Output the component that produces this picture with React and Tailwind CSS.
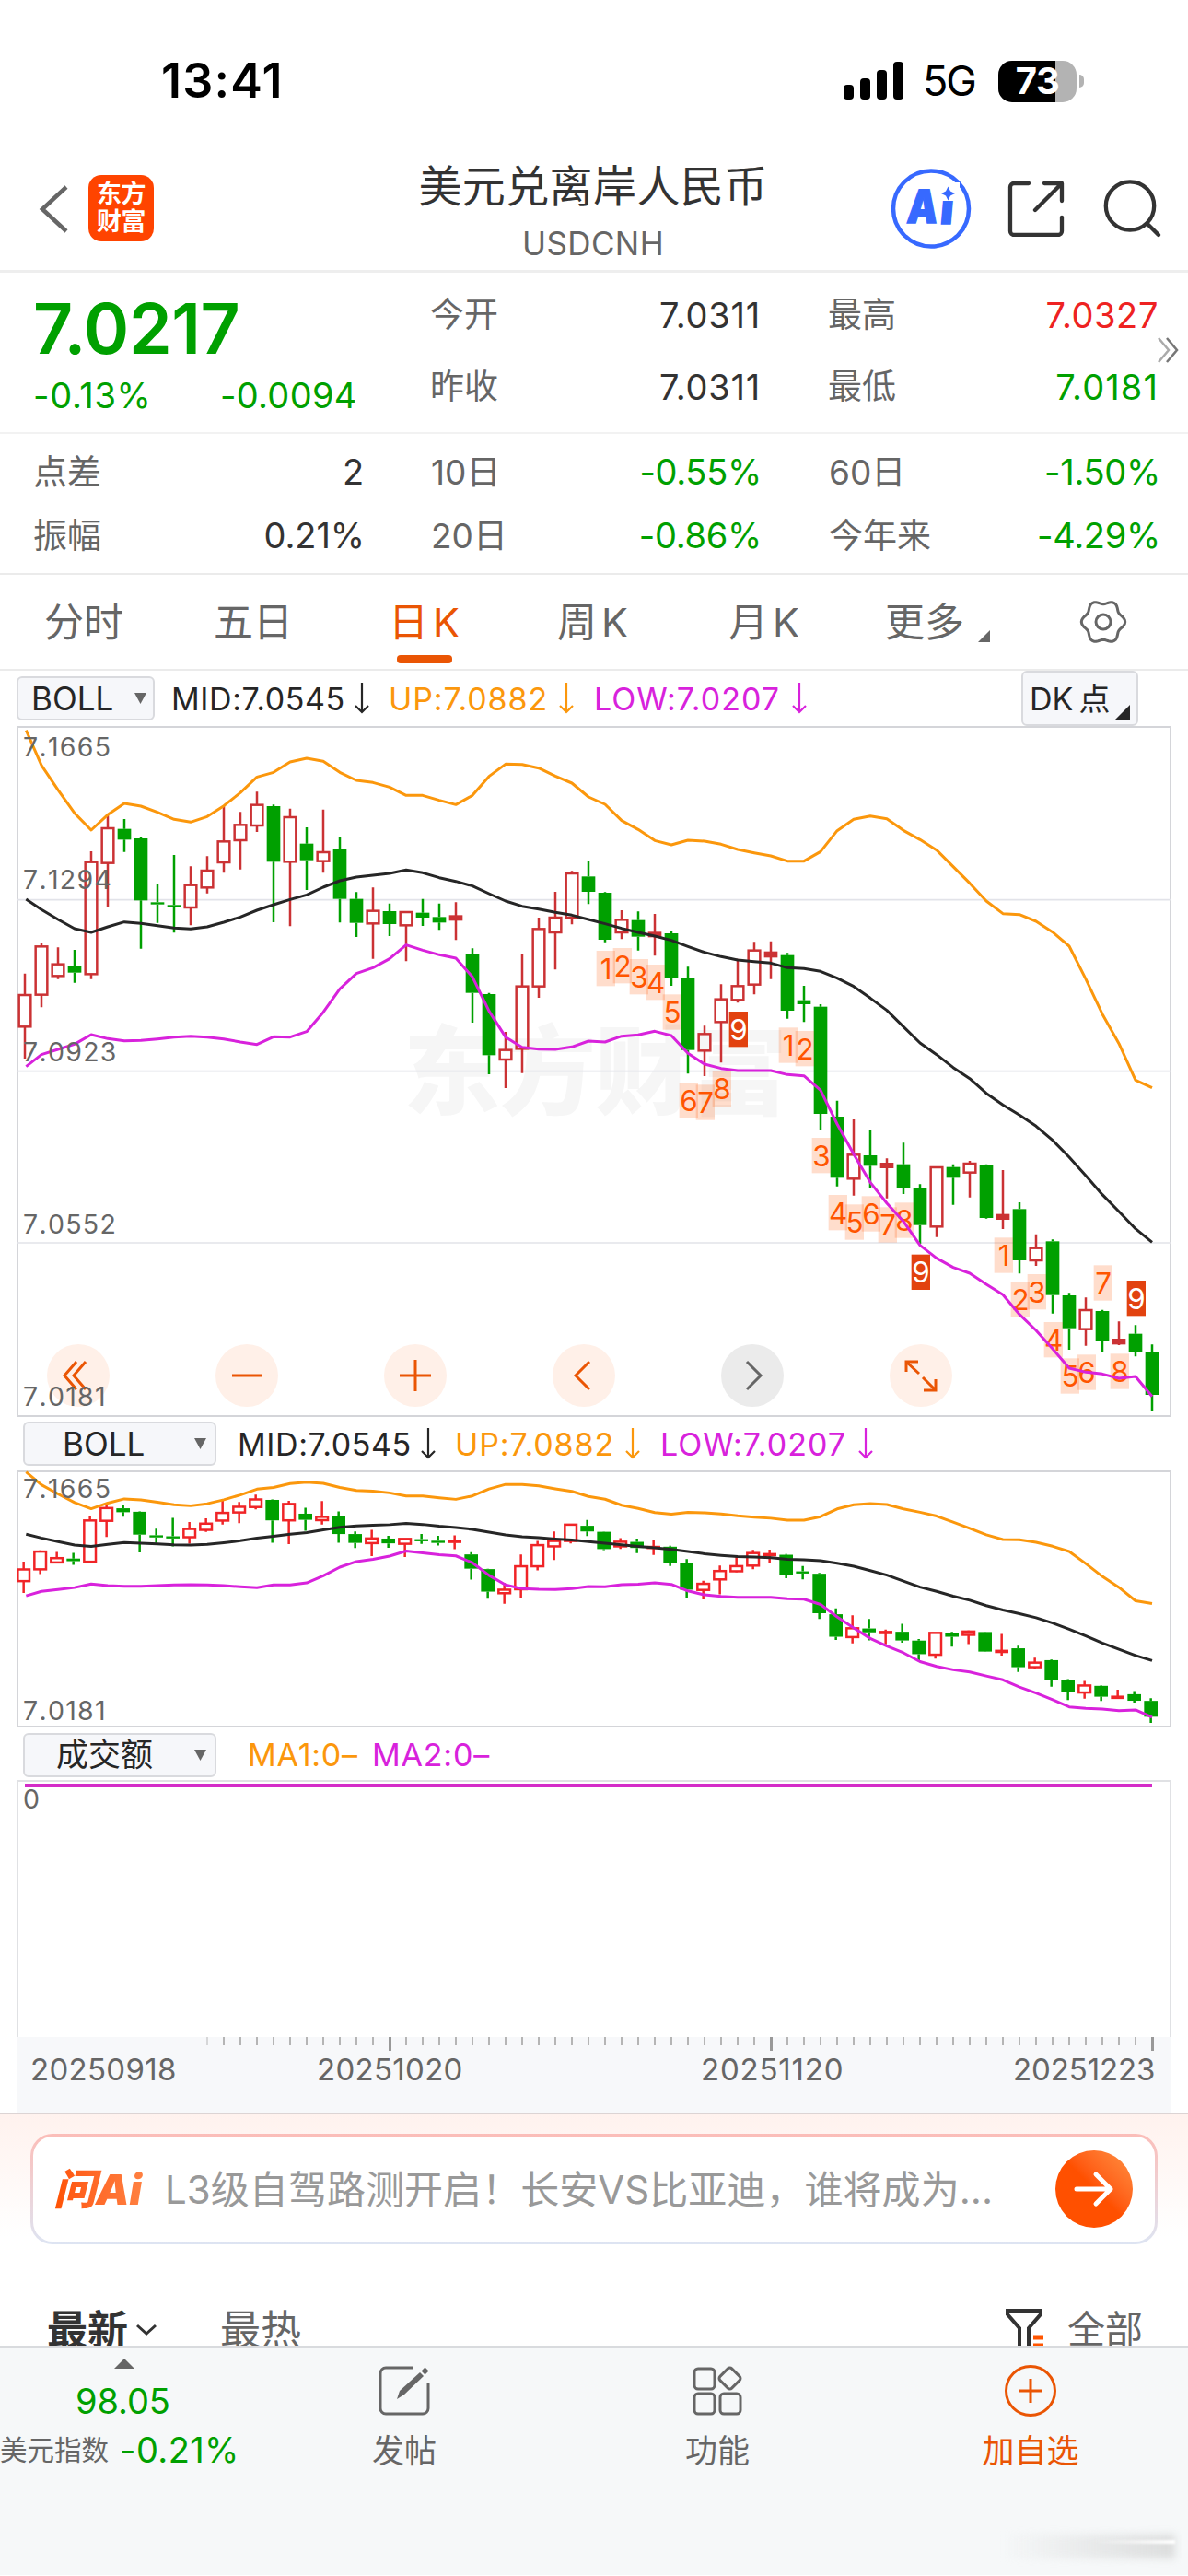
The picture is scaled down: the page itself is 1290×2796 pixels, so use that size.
const FONT = 'font-[Inter,"Noto_Sans_CJK_SC",sans-serif]';

// [color, high, bodyTop, bodyBottom, low], in 1/3 px
const candles = [
  ['r', 1010, 1080, 1183, 1287], ['r', 912, 922, 1079, 1120], ['r', 925, 980, 1018, 1028],
  ['g', 933, 984, 1007, 1040], ['r', 612, 647, 1012, 1028], ['r', 495, 537, 650, 793],
  ['g', 507, 539, 574, 614], ['g', 567, 570, 772, 929], ['g', 720, 778, 784, 845],
  ['g', 624, 787, 794, 877], ['r', 661, 722, 795, 853], ['r', 628, 675, 730, 749],
  ['r', 465, 580, 648, 682], ['r', 484, 526, 576, 671], ['r', 418, 461, 528, 549],
  ['g', 460, 465, 646, 843], ['r', 473, 501, 646, 856], ['g', 534, 587, 641, 738],
  ['r', 476, 615, 644, 682], ['g', 567, 604, 767, 844], ['g', 745, 767, 845, 891],
  ['r', 730, 806, 847, 962], ['g', 782, 807, 849, 888], ['r', 808, 810, 853, 970],
  ['g', 767, 812, 828, 855], ['g', 782, 826, 844, 868], ['r', 778, 822, 836, 901],
  ['g', 928, 947, 1073, 1170], ['g', 1073, 1077, 1276, 1338], ['r', 1200, 1259, 1290, 1383],
  ['r', 948, 1052, 1255, 1334], ['r', 828, 865, 1052, 1089], ['r', 744, 828, 876, 997],
  ['r', 676, 684, 828, 850], ['g', 643, 694, 744, 784], ['g', 745, 747, 900, 908],
  ['r', 804, 835, 876, 898], ['g', 808, 836, 890, 935], ['r', 816, 876, 890, 952],
  ['g', 870, 879, 1026, 1050], ['g', 988, 1025, 1259, 1336], ['r', 1180, 1207, 1261, 1344],
  ['r', 1045, 1094, 1168, 1300], ['r', 962, 1051, 1096, 1105], ['r', 907, 935, 1046, 1078],
  ['r', 905, 940, 956, 1028], ['g', 943, 950, 1131, 1157], ['g', 1050, 1097, 1110, 1168],
  ['g', 1110, 1118, 1467, 1518], ['g', 1424, 1476, 1675, 1703], ['r', 1485, 1600, 1678, 1733],
  ['g', 1518, 1602, 1636, 1708], ['r', 1612, 1628, 1642, 1742], ['g', 1561, 1631, 1708, 1728],
  ['g', 1696, 1709, 1829, 1890], ['r', 1640, 1641, 1834, 1868], ['g', 1631, 1640, 1675, 1763],
  ['r', 1620, 1629, 1658, 1739], ['g', 1631, 1633, 1806, 1808], ['r', 1650, 1795, 1810, 1842],
  ['g', 1755, 1777, 1944, 1987], ['r', 1859, 1904, 1944, 1962], ['g', 1876, 1882, 2057, 2117],
  ['g', 2050, 2058, 2165, 2235], ['r', 2065, 2106, 2168, 2222], ['g', 2105, 2109, 2205, 2242],
  ['r', 2143, 2201, 2216, 2220], ['g', 2155, 2183, 2241, 2257], ['g', 2218, 2242, 2382, 2436],
];

const upper = [218, 332, 412, 488, 543, 493, 456, 465, 485, 508, 517, 499, 464, 421, 370, 355, 321, 309, 319, 355, 381, 388, 403, 430, 430, 446, 460, 430, 368, 328, 329, 341, 367, 390, 435, 459, 512, 541, 577, 591, 576, 579, 589, 606, 617, 627, 644, 644, 613, 545, 508, 497, 506, 544, 574, 608, 662, 716, 774, 815, 818, 840, 875, 921, 1028, 1142, 1238, 1357, 1382];
const middle = [768, 802, 834, 864, 876, 858, 842, 847, 854, 862, 865, 858, 843, 826, 804, 786, 769, 754, 729, 708, 696, 690, 684, 673, 682, 698, 710, 725, 750, 774, 791, 800, 811, 820, 834, 848, 863, 876, 888, 902, 922, 941, 955, 966, 971, 976, 991, 994, 1003, 1025, 1052, 1090, 1130, 1183, 1236, 1274, 1316, 1352, 1400, 1438, 1471, 1507, 1553, 1608, 1668, 1730, 1785, 1841, 1885];
const lower = [1313, 1274, 1257, 1240, 1209, 1222, 1229, 1228, 1223, 1217, 1214, 1217, 1223, 1233, 1241, 1216, 1217, 1199, 1136, 1060, 1010, 991, 962, 917, 934, 949, 960, 1021, 1132, 1217, 1250, 1256, 1257, 1249, 1230, 1233, 1214, 1210, 1198, 1212, 1270, 1305, 1319, 1326, 1326, 1326, 1339, 1343, 1390, 1500, 1598, 1690, 1758, 1817, 1895, 1937, 1967, 1986, 2022, 2056, 2120, 2172, 2232, 2295, 2308, 2314, 2328, 2322, 2387];

// [candle index, digit, top]
const marks = [
  [35, 1, 936], [36, 2, 927], [37, 3, 963], [38, 4, 981], [39, 5, 1078], [40, 6, 1365], [41, 7, 1372],
  [42, 8, 1328], [43, 9, 1134], [46, 1, 1186], [47, 2, 1197], [48, 3, 1545], [49, 4, 1731], [50, 5, 1762],
  [51, 6, 1735], [52, 7, 1771], [53, 8, 1756], [54, 9, 1925], [59, 1, 1870], [60, 2, 2015], [61, 3, 1989],
  [62, 4, 2145], [63, 5, 2263], [64, 6, 2251], [65, 7, 1960], [66, 8, 2248], [67, 9, 2010],
];

const xAt = (i) => 81 + 54 * i;
const same = (v) => v;
const squeeze = (v) => 2633 + (v - 218) * 0.3683;

const Candles = ({ y, red, shift = 0 }) =>
  candles.map(([c, h, t, b, l], i) => {
    const x = xAt(i) + shift;
    const color = c === 'r' ? red : '#00a000';
    const top = y(t);
    const height = Math.max(y(b) - top, 7);
    const hollow = c === 'r' && height > 9 && b - t > 20;
    return (
      <g key={i} stroke={color} strokeWidth="7.5">
        <path d={`M${x} ${y(h)}V${top}M${x} ${top + height}V${y(l)}`} />
        {hollow ? (
          <rect x={x - 19} y={top} width="38" height={height} fill="none" />
        ) : (
          <rect x={x - 22} y={top - (c === 'r' ? 2 : 0)} width="44" height={height + (c === 'r' ? 4 : 0)} fill={color} stroke="none" />
        )}
      </g>
    );
  });

const Line = ({ data, y, color }) => (
  <polyline
    points={data.map((v, i) => `${xAt(i) + (i === 0 ? 4 : 0)},${y(v)}`).join(' ')}
    fill="none"
    stroke={color}
    strokeWidth="9"
    strokeLinejoin="round"
  />
);

const Lines = ({ y }) => (
  <>
    <Line data={upper} y={y} color="#fb970c" />
    <Line data={middle} y={y} color="#262626" />
    <Line data={lower} y={y} color="#d822dc" />
  </>
);

const DownArrow = () => (
  <svg className="ml-[10px] h-[36px] w-[16px] shrink-0" viewBox="0 0 16 36" fill="none" stroke="currentColor" strokeWidth="2.2">
    <path d="M8 1v32M1 26l7 7 7-7" />
  </svg>
);

const Caret = () => (
  <svg className="h-[12px] w-[13px]" viewBox="0 0 13 12" fill="#666"><path d="M0 0h13L6.5 12z" /></svg>
);

const BollLegend = () => (
  <>
    <div className="flex w-[236px] items-center text-[#262626]">
      <span className="w-[189px] text-[34px] tracking-[0.6px]">MID:7.0545</span><DownArrow />
    </div>
    <div className="flex w-[223px] items-center text-[#fb970c]">
      <span className="w-[175px] text-[34px] tracking-[0.9px]">UP:7.0882</span><DownArrow />
    </div>
    <div className="flex items-center text-[#d822dc]">
      <span className="w-[205px] text-[34px] tracking-[1px]">LOW:7.0207</span><DownArrow />
    </div>
  </>
);

const StatusBar = () => (
  <div className="flex h-[150px] items-center pt-[26px] pr-[113px] pl-[175px] text-black">
    <span className="text-[52px] font-semibold tracking-[1.2px]">13:41</span>
    <div className="ml-auto flex items-center">
      <svg className="h-[42px] w-[66px]" viewBox="0 0 66 42">
        <rect y="25" width="11" height="16" rx="4" />
        <rect x="18" y="18" width="11" height="23" rx="4" />
        <rect x="36" y="9" width="11" height="32" rx="4" />
        <rect x="54" y="0" width="11" height="41" rx="4" />
      </svg>
      <span className="ml-[20px] w-[62px] text-[45px] tracking-[-2px]">5G</span>
      <div className="relative ml-[20px] h-[45px] w-[85px] overflow-hidden rounded-[15px] bg-[#b3b3b3]">
        <div className="h-full w-[62px] bg-black" />
        <span className="absolute inset-0 flex items-center justify-center text-[40px] font-bold tracking-[-0.5px] text-white">73</span>
      </div>
      <div className="ml-[3px] h-[14px] w-[5px] rounded-r-full bg-[#b3b3b3]" />
    </div>
  </div>
);

const Header = () => (
  <div className="relative flex h-[146px] items-center border-b-[3px] border-[#eee]">
    <svg className="ml-[42px] mt-[10px] h-[54px] w-[34px]" viewBox="0 0 34 54" fill="none" stroke="#666" strokeWidth="4.500">
      <path d="M30 3L4 27l26 24" />
    </svg>
    <div className="mt-[9px] ml-[20px] flex h-[72px] w-[71px] flex-col items-center justify-center rounded-[14px] bg-[#ff4400] text-[27px] leading-[30px] font-bold tracking-[-0.5px] text-white">
      <span>东方</span>
      <span>财富</span>
    </div>
    <div className="absolute inset-x-0 top-[20px] flex flex-col items-center pr-[2px]">
      <span className="text-[47px] leading-[64px] tracking-[0.4px] text-[#333]">美元兑离岸人民币</span>
      <span className="text-[35px] leading-[60px] tracking-[0.4px] text-[#666]">USDCNH</span>
    </div>
    {/* Right icons */}
    <svg className="mt-[9px] ml-auto h-[88px] w-[88px]" viewBox="0 0 88 88" fill="none" stroke="#3769ff">
      <circle cx="44" cy="44.500" r="41" strokeWidth="4.500" />
      <g transform="translate(21 61) skewX(-5)" fill="#3769ff" stroke="#3769ff" strokeWidth="1.500" fontSize="50" fontWeight="900">
        <text x="-4" y="-1" textLength="33" lengthAdjust="spacingAndGlyphs">A</text>
        <text x="32" y="0" fontSize="48">i</text>
      </g>
      <rect x="51" y="16" width="24" height="20" fill="#fff" stroke="none" />
      <path d="M62.500 20.500l2.500 5 5 2.500-5 2.500-2.500 5-2.500-5-5-2.500 5-2.500z" fill="#3769ff" stroke="none" />
    </svg>
    <svg className="mt-[9px] ml-[38px] h-[62px] w-[64px]" viewBox="0 0 64 62" fill="none" stroke="#333" strokeWidth="4.300" strokeLinecap="round" strokeLinejoin="round">
      <path d="M24 4H8a4 4 0 0 0-4 4v48a4 4 0 0 0 4 4h48a4 4 0 0 0 4-4V41M41 4h19v19M59 5L31 33" />
    </svg>
    <svg className="mt-[9px] mr-[29px] ml-[40px] h-[64px] w-[64px]" viewBox="0 0 64 64" fill="none" stroke="#333" strokeWidth="4.300" strokeLinecap="round">
      <circle cx="30" cy="29.500" r="26.200" />
      <path d="M49 49l12 12" />
    </svg>
  </div>
);

const Stat = ({ label, value, color = 'text-[#333] tracking-[0.8px]' }) => (
  <div className="flex items-center justify-between">
    <span className="text-[37px] text-[#666]">{label}</span>
    <span className={`text-[38px] ${color}`}>{value}</span>
  </div>
);

const green = 'text-[#00a000] tracking-[-0.3px]';

const Quote = () => (
  <>
    <div className="relative flex h-[173px] text-[#00a000]">
      <div className="w-[467px] pl-[36px]">
        <div className="mt-[16px] text-[75px] leading-[90px] font-semibold tracking-[-0.4px]">7.0217</div>
        <div className="flex h-[54px] items-center text-[38px]">
          <span className="w-[203px] tracking-[0.7px]">-0.13%</span>
          <span className="tracking-[0.3px]">-0.0094</span>
        </div>
      </div>
      <div className="grid w-[359px] grid-rows-[78px_78px] pt-[7px]">
        <Stat label="今开" value="7.0311" />
        <Stat label="昨收" value="7.0311" />
      </div>
      <div className="ml-[73px] grid w-[359px] grid-rows-[78px_78px] pt-[7px]">
        <Stat label="最高" value="7.0327" color="text-[#ee2222] tracking-[0.6px]" />
        <Stat label="最低" value="7.0181" color="text-[#00a000] tracking-[1.1px]" />
      </div>
      <svg className="absolute top-[69px] right-[9px] h-[30px] w-[25px]" viewBox="0 0 25 30" fill="none" stroke="#777" strokeWidth="2.500">
        <path d="M2 2l11 13L2 28" stroke="#aaa" />
        <path d="M11 2l11 13-11 13" />
      </svg>
    </div>
    <div className="flex h-[153px] border-t-2 border-[#f2f2f2]">
      <div className="ml-[36px] grid w-[360px] grid-rows-[69px_69px] pt-[7px]">
        <Stat label="点差" value="2" />
        <Stat label="振幅" value="0.21%" color="text-[#333] tracking-[-0.1px]" />
      </div>
      <div className="ml-[72px] grid w-[359px] grid-rows-[69px_69px] pt-[7px]">
        <Stat label="10日" value="-0.55%" color={green} />
        <Stat label="20日" value="-0.86%" color={green} />
      </div>
      <div className="ml-[73px] grid w-[360px] grid-rows-[69px_69px] pt-[7px]">
        <Stat label="60日" value="-1.50%" color={green} />
        <Stat label="今年来" value="-4.29%" color={green} />
      </div>
    </div>
  </>
);

const gear = Array.from({ length: 72 }, (_, k) => {
  const a = (k * Math.PI) / 36;
  const r = 21.5 + 2.2 * Math.cos(6 * a);
  return `${(26 + r * Math.cos(a)).toFixed(2)},${(26 + r * Math.sin(a)).toFixed(2)}`;
}).join(' ');

const Periods = () => (
  <div className="flex h-[106px] items-center border-t-2 border-b-2 border-[#ebebeb] text-[43px] text-[#666]">
    <span className="ml-[48px] w-[184px]">分时</span>
    <span className="w-[190px]">五日</span>
    <span className="relative w-[183px] text-[#ea5504]">
      日<span className="ml-[5px]">K</span>
      <span className="absolute -bottom-[13px] left-[9px] h-[9px] w-[60px] rounded-[4px] bg-[#ea5504]" />
    </span>
    <span className="w-[186px]">周<span className="ml-[5px]">K</span></span>
    <span className="w-[170px]">月<span className="ml-[5px]">K</span></span>
    <span>更多</span>
    <svg className="mt-[30px] ml-[15px] h-[13px] w-[13px]" viewBox="0 0 13 13" fill="#666"><path d="M13 0v13H0z" /></svg>
    <svg className="ml-[97px] h-[52px] w-[52px]" viewBox="0 0 52 52" fill="none" stroke="#666" strokeWidth="3">
      <polygon points={gear} />
      <circle cx="26" cy="26" r="8" />
    </svg>
  </div>
);

const YLabel = ({ className, children }) => (
  <span className={`absolute left-[5px] text-[28.5px] leading-[28px] tracking-[1.3px] text-[#666] [font-kerning:none] ${className}`}>{children}</span>
);

const controls = [
  { d: 'M32 19L19 34l13 15M42 19L29 34l13 15', style: 'left-[31px] bg-[#fff0e8] text-[#ea5504]' },
  { d: 'M18 34h32', style: 'left-[214px] bg-[#fff0e8] text-[#ea5504]' },
  { d: 'M17 34h34M34 17v34', style: 'left-[397px] bg-[#fff0e8] text-[#ea5504]' },
  { d: 'M40 19L25 34l15 15', style: 'left-[580px] bg-[#fff0e8] text-[#ea5504]' },
  { d: 'M28 19l15 15-15 15', style: 'left-[763px] bg-[#ebebeb] text-[#666]' },
  { d: 'M18 30V19h13M18 19l14 13M50 38v12H37M50 50L36 36', style: 'left-[946px] bg-[#fff0e8] text-[#ea5504]' },
];

const MainChart = () => (
  <div className="relative ml-[18px] h-[750px] w-[1254px] border-2 border-b-[#d4d5d9] border-[#d4d5d9]">
    <span className="absolute top-[318px] left-[418px] flex text-[105px] leading-[110px] font-black tracking-[-1px] text-[#f6f6f6]">东方财富</span>
    {controls.map(({ d, style }) => (
      <button key={d} className={`absolute top-[669px] h-[68px] w-[68px] rounded-full ${style}`}>
        <svg viewBox="0 0 68 68" fill="none" stroke="currentColor" strokeWidth="3"><path d={d} /></svg>
      </button>
    ))}
    <svg className="absolute -top-[2px] -left-[2px] h-[750px] w-[1254px]" viewBox="54 204 3762 2250">
      <g stroke="#e2e3e9" strokeWidth="5">
        <path d="M54 770H3816M54 1328H3816M54 1887H3816" />
      </g>
      <Candles y={same} red="#cb3234" />
      {marks.map(([i, n, top]) => (
        <g key={i}>
          <rect x={xAt(i) - 28} y={top} width="61" height="115" fill={n === 9 ? '#e2420f' : '#ff5500'} fillOpacity={n === 9 ? 1 : 0.2} />
          <text x={xAt(i) + 3} y={top + 92} textAnchor="middle" fontSize="94" fill={n === 9 ? '#fff' : '#ff5500'}>{n}</text>
        </g>
      ))}
      <Lines y={same} />
    </svg>
    <YLabel className="top-[7px]">7.1665</YLabel>
    <YLabel className="top-[151px]">7.1294</YLabel>
    <YLabel className="top-[338px]">7.0923</YLabel>
    <YLabel className="top-[525px]">7.0552</YLabel>
    <YLabel className="top-[712px]">7.0181</YLabel>
  </div>
);

const SubChart = () => (
  <div className="relative ml-[18px] h-[279px] w-[1254px] border-2 border-[#d4d5d9]">
    <svg className="absolute -top-[2px] -left-[2px] h-[278px] w-[1254px]" viewBox="54 2628 3762 834">
      <Candles y={squeeze} red="#f02427" shift={-4} />
      <Lines y={squeeze} />
    </svg>
    <YLabel className="top-[4px]">7.1665</YLabel>
    <YLabel className="top-[245px]">7.0181</YLabel>
  </div>
);

const VolumeChart = () => (
  <>
    <div className="relative ml-[18px] h-[279px] w-[1254px] border-2 border-b-0 border-[#e0e1e4]">
      <div className="absolute top-[2px] left-[7px] h-[4px] w-[1224px] bg-[#d42cc8]" />
      <YLabel className="top-[5px]">0</YLabel>
    </div>
    <div className="ml-[18px] h-[82px] w-[1254px] bg-[#f7f8fa]">
      <svg className="block h-[15px] w-[1254px]" viewBox="18 0 1254 15">
        {Array.from({ length: 58 }, (_, k) => {
          const major = (k - 11) % 23 === 0;
          return (
            <rect key={k} x={224 + 18 * k} width={major ? 3 : 2} height={major ? 15 : 9} fill={major ? '#999' : '#b5b5b5'} opacity={k === 0 ? 0.5 : 1} />
          );
        })}
      </svg>
      <div className="flex h-[40px] items-center pt-[2px] pl-[15px] text-[33px] tracking-[0.3px] text-[#666]">
        <span className="w-[311px]">20250918</span>
        <span className="w-[417px]">20251020</span>
        <span className="w-[339px] tracking-[0.8px]">20251120</span>
        <span className="tracking-[-0.1px]">20251223</span>
      </div>
    </div>
  </>
);

const AskBar = () => (
  <div className="h-[180px] border-t-2 border-[#dcd4d4] bg-linear-to-b from-[#fff2ee] to-white to-75% px-[33px] pt-[21px]">
    <div className="h-[120px] rounded-[24px] bg-linear-to-b from-[#fbbdb8] to-[#dde4f2] p-[3px]">
      <div className="flex h-full items-center rounded-[21px] bg-white pr-[24px] pl-[22px]">
        <span className="w-[121px] bg-linear-to-r from-[#ff5200] to-[#ff8a4a] bg-clip-text text-[46px] font-black text-transparent italic">
          问Ai
        </span>
        <span className="whitespace-nowrap text-[42px] tracking-[0.05px] text-[#999]">L3级自驾路测开启！长安VS比亚迪，谁将成为...</span>
        <button className="ml-auto flex h-[84px] w-[84px] shrink-0 items-center justify-center rounded-full bg-linear-to-tr from-[#ff5000] from-50% to-[#ff9040]">
          <svg className="h-[44px] w-[44px]" viewBox="0 0 44 44" fill="none" stroke="#fff" strokeWidth="5" strokeLinecap="round" strokeLinejoin="round">
            <path d="M3 22h37M24 6l16 16-16 16" />
          </svg>
        </button>
      </div>
    </div>
  </div>
);

const Comments = () => (
  <div className="h-[73px] overflow-hidden">
    <div className="mt-[24px] flex h-[64px] items-center text-[44px] text-[#666]">
      <span className="ml-[51px] font-bold text-[#333]">最新</span>
      <svg className="ml-[8px] h-[14px] w-[24px]" viewBox="0 0 24 14" fill="none" stroke="#333" strokeWidth="3"><path d="M2 2l10 9L22 2" /></svg>
      <span className="ml-[68px]">最热</span>
      <svg className="mt-[2px] ml-auto h-[50px] w-[44px]" viewBox="0 0 44 50" fill="none" stroke="#333" strokeWidth="4">
        <path d="M16 42V22L3 7V3h36v4L26 22v25" />
        <path d="M31 32h11M31 41h11" stroke="#ff5500" strokeWidth="5" />
      </svg>
      <span className="mr-[49px] ml-[24px] text-[41px]">全部</span>
    </div>
  </div>
);

const BottomBar = () => (
  <div className="relative flex h-[249px] border-t-2 border-[#d9dbde] bg-[#f6f8f9] text-[35px] text-[#666]">
    <div className="flex w-[270px] flex-col">
      <svg className="mt-[12px] ml-[124px] h-[11px] w-[22px]" viewBox="0 0 22 11" fill="#666"><path d="M11 0l11 11H0z" /></svg>
      <span className="mt-[8px] pl-[82px] text-[38px] leading-[54px] tracking-[-0.1px] text-[#00a000]">98.05</span>
      <div className="flex h-[52px] items-center">
        <span className="w-[130px] whitespace-nowrap text-[29.5px]">美元指数</span>
        <span className="text-[38px] tracking-[0.4px] text-[#00a000]">-0.21%</span>
      </div>
    </div>
    <div className="flex w-[338px] flex-col items-center">
      <svg className="mt-[20px] h-[54px] w-[56px]" viewBox="0 0 56 54" fill="none" stroke="#666" strokeWidth="3">
        <path d="M38 2H8a6 6 0 0 0-6 6v38a6 6 0 0 0 6 6h40a6 6 0 0 0 6-6V18" />
        <path d="M20 36l3-9L45 7l4 4-21 20z" fill="#666" stroke="none" />
        <path d="M46.500 5.500l4-4 4 4-4 4z" fill="#666" stroke="none" />
      </svg>
      <span className="mt-[12px] leading-[52px]">发帖</span>
    </div>
    <div className="flex w-[342px] flex-col items-center">
      <svg className="mt-[20px] h-[54px] w-[54px]" viewBox="0 0 54 54" fill="none" stroke="#666" strokeWidth="3">
        <rect x="2" y="3" width="22" height="22" rx="4" />
        <rect x="2" y="30" width="22" height="22" rx="4" />
        <rect x="30" y="30" width="22" height="22" rx="4" />
        <rect x="31.500" y="4.500" width="18" height="18" rx="3" transform="rotate(45 40.500 13.500)" />
      </svg>
      <span className="mt-[12px] leading-[52px]">功能</span>
    </div>
    <div className="flex w-[338px] flex-col items-center text-[#ea5504]">
      <svg className="mt-[18px] h-[58px] w-[58px]" viewBox="0 0 58 58" fill="none" stroke="currentColor" strokeWidth="3">
        <circle cx="29" cy="29" r="26.500" />
        <path d="M16 29h26M29 16v26" />
      </svg>
      <span className="mt-[10px] leading-[52px]">加自选</span>
    </div>
    {/* Faint smudge in the corner */}
    <div className="absolute right-[14px] bottom-[18px] h-[26px] w-[190px] bg-linear-to-r from-transparent to-[#dcdddd] blur-[4px]" />
    <div className="absolute right-[14px] bottom-[34px] h-[4px] w-[90px] bg-linear-to-r from-transparent to-white blur-[1px]" />
  </div>
);

const App = () => (
  <div className={`flex h-[2796px] w-[1290px] flex-col overflow-hidden bg-white ${FONT}`}>
    <StatusBar />
    <Header />
    <Quote />
    <Periods />
    <div className="flex h-[60px] items-center pl-[18px]">
      <div className="mr-[18px] flex h-[48px] w-[150px] items-center justify-between rounded-[6px] border-2 border-[#d9dade] bg-[#f6f7fa] pr-[7px] pl-[14px] text-[35px] text-[#262626]">
        BOLL<Caret />
      </div>
      <BollLegend />
      <div className="relative mr-[54px] ml-auto flex h-[60px] w-[127px] items-center rounded-[6px] border-2 border-[#d9dade] bg-[#f6f7fa] pl-[7px] text-[34px] text-[#262626]">
        DK<span className="ml-[6px] text-[34px]">点</span>
        <svg className="absolute right-[7px] bottom-[4px] h-[17px] w-[17px]" viewBox="0 0 17 17" fill="#262626"><path d="M17 0v17H0z" /></svg>
      </div>
    </div>
    <MainChart />
    <div className="flex h-[58px] items-center pl-[25px]">
      <div className="mr-[23px] flex h-[48px] w-[210px] items-center justify-between rounded-[6px] border-2 border-[#d9dade] bg-[#f6f7fa] pr-[9px] pl-[41px] text-[35px] text-[#262626]">
        BOLL<Caret />
      </div>
      <BollLegend />
    </div>
    <SubChart />
    <div className="flex h-[57px] items-center pt-[2px] pl-[25px] text-[34px]">
      <div className="mr-[34px] flex h-[48px] w-[210px] items-center justify-between rounded-[6px] border-2 border-[#d9dade] bg-[#f6f7fa] pr-[9px] pl-[34px] text-[35px] text-[#262626]">
        成交额<Caret />
      </div>
      <span className="w-[135px] tracking-[0.8px] text-[#fb970c]">MA1:0–</span>
      <span className="tracking-[0.8px] text-[#d822dc]">MA2:0–</span>
    </div>
    <VolumeChart />
    <AskBar />
    <Comments />
    <BottomBar />
  </div>
);

export default App;
